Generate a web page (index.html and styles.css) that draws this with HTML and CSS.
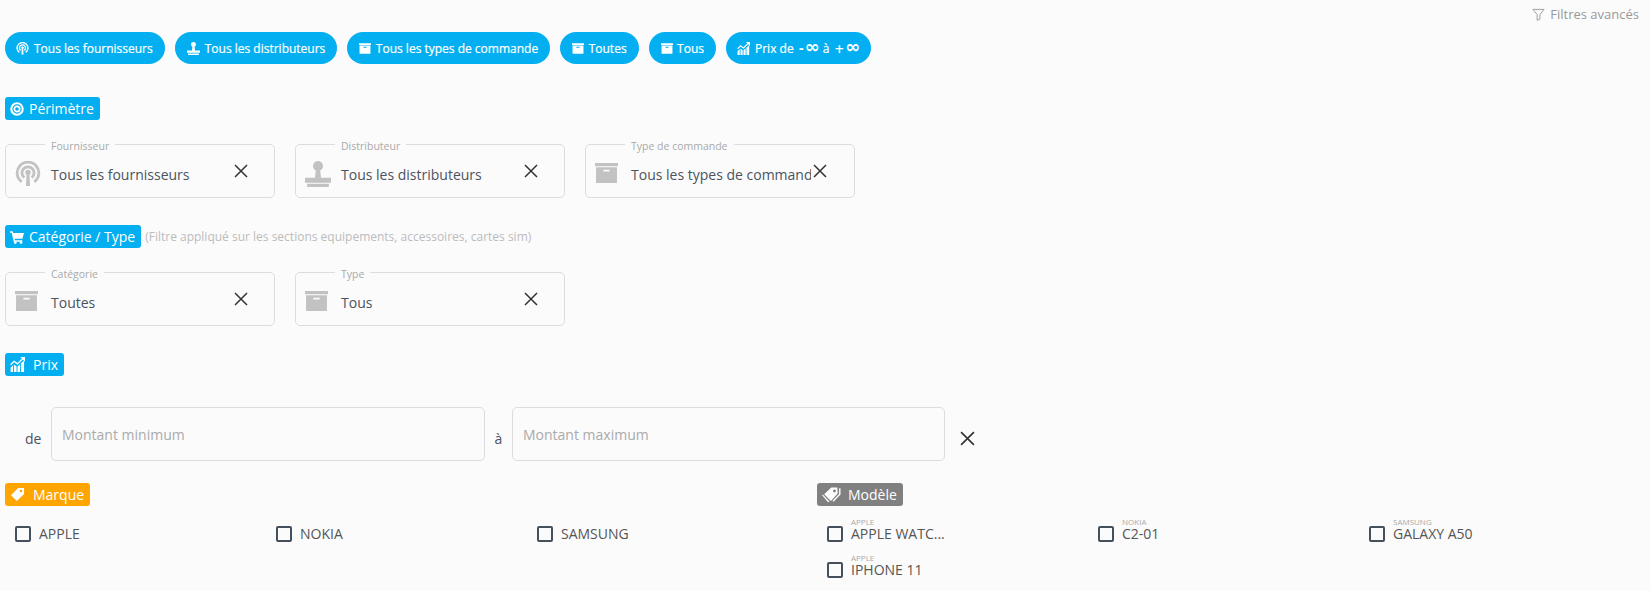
FILE: index.html
```html
<!DOCTYPE html>
<html lang="fr">
<head>
<meta charset="utf-8">
<title>Filtres</title>
<link rel="stylesheet" href="styles.css">
</head>
<body>
<svg class="defs" width="0" height="0" aria-hidden="true">
  <symbol id="i-pod" viewBox="0 0 24 24"><path fill="none" stroke="currentColor" stroke-width="2.600" d="M6.200 19.200a10 10 0 1 1 11.600 0M8.600 15.400a5.600 5.600 0 1 1 6.800 0"/><circle cx="12" cy="10.600" r="2.500" fill="currentColor"/><path fill="currentColor" d="M10.600 13h2.800l.5 10h-3.800z"/></symbol>
  <symbol id="i-stamp" viewBox="0 0 24 24"><circle cx="12" cy="4.600" r="4.600" fill="currentColor"/><path fill="currentColor" d="M10 8h4l.8 8h-5.600zM0 15.500h24v4.500H0zM2 21h20v3H2z"/></symbol>
  <symbol id="i-box" viewBox="0 0 22 19"><path fill="currentColor" fill-rule="evenodd" d="M0 0h22v3H0zM1 4h20v15H1zM8 6.500V8h6V6.500z"/></symbol>
  <symbol id="i-chart" viewBox="0 0 24 24"><path fill="currentColor" d="M1 17l4-4v11H1zM6.500 12l4 3v9h-4zM12 15l4-3.500V24h-4zM17.500 10l5-4.500V24h-5z"/><path fill="none" stroke="currentColor" stroke-width="2" d="M1 12.500l5.500-5.500 5.500 4 8.500-8.500"/><path fill="currentColor" d="M16.500 0H24v7.500z"/></symbol>
  <symbol id="i-target" viewBox="0 0 24 24"><circle cx="12" cy="12" r="9.800" fill="none" stroke="currentColor" stroke-width="3.600"/><circle cx="12" cy="12" r="4.600" fill="none" stroke="currentColor" stroke-width="3"/></symbol>
  <symbol id="i-cart" viewBox="0 0 24 24"><path fill="currentColor" d="M0 2h4.500l.8 3H24l-2.800 10H8l.5 2.500h12.500v2.500H6.500L2.800 4.500H0z"/><circle cx="9" cy="21.500" r="2.300" fill="currentColor"/><circle cx="19" cy="21.500" r="2.300" fill="currentColor"/></symbol>
  <symbol id="i-tag" viewBox="0 0 24 24"><path fill="currentColor" fill-rule="evenodd" d="M13 1.500h9.500v9.500L11 22.500 1.500 13zM17.500 4.500a2 2 0 1 0 0 4 2 2 0 0 0 0-4z"/></symbol>
  <symbol id="i-tags" viewBox="0 0 28 24"><path fill="currentColor" fill-rule="evenodd" d="M13 2h8.500l.5 8.500L12.500 21 3 11.500zM17.500 5a2 2 0 1 0 0 4 2 2 0 0 0 0-4z"/><path fill="none" stroke="currentColor" stroke-width="2" d="M25 3v8.500L15.500 21.500"/><path fill="currentColor" d="M1 12l9.500 10-2 1L0 13z"/></symbol>
  <symbol id="i-x" viewBox="0 0 14 14"><path fill="none" stroke="currentColor" stroke-width="1.500" d="M1 1l12 12M13 1L1 13"/></symbol>
</svg>

<main class="page">
  <div class="advanced">
    <svg class="filter-icon" viewBox="0 0 14 14"><path fill="none" stroke="currentColor" stroke-width="1" d="M1 1.500h12L8.500 7v5l-3 1.200V7z"/></svg>
    <span>Filtres avancés</span>
  </div>

  <div class="pills">
    <span class="pill"><svg class="pill-ic"><use href="#i-pod"/></svg>Tous les fournisseurs</span>
    <span class="pill"><svg class="pill-ic pill-ic-stamp"><use href="#i-stamp"/></svg>Tous les distributeurs</span>
    <span class="pill"><svg class="pill-ic pill-ic-box"><use href="#i-box"/></svg>Tous les types de commande</span>
    <span class="pill"><svg class="pill-ic pill-ic-box"><use href="#i-box"/></svg>Toutes</span>
    <span class="pill"><svg class="pill-ic pill-ic-box"><use href="#i-box"/></svg>Tous</span>
    <span class="pill"><svg class="pill-ic"><use href="#i-chart"/></svg>Prix de<b class="inf"><i class="sign">-</i>∞</b>à<b class="inf inf-plus"><i class="sign">+</i>∞</b></span>
  </div>

  <div class="head head-perimetre"><span class="badge"><svg class="badge-ic"><use href="#i-target"/></svg>Périmètre</span></div>
  <div class="fields">
    <div class="field">
      <span class="legend">Fournisseur</span>
      <svg class="field-ic"><use href="#i-pod"/></svg>
      <span class="value">Tous les fournisseurs</span>
      <svg class="clear"><use href="#i-x"/></svg>
    </div>
    <div class="field">
      <span class="legend">Distributeur</span>
      <svg class="field-ic"><use href="#i-stamp"/></svg>
      <span class="value">Tous les distributeurs</span>
      <svg class="clear"><use href="#i-x"/></svg>
    </div>
    <div class="field">
      <span class="legend">Type de commande</span>
      <svg class="field-ic field-ic-box"><use href="#i-box"/></svg>
      <span class="value value-clip">Tous les types de commande</span>
      <svg class="clear clear-tight"><use href="#i-x"/></svg>
    </div>
  </div>

  <div class="head head-cat"><span class="badge"><svg class="badge-ic"><use href="#i-cart"/></svg>Catégorie / Type</span><span class="note">(Filtre appliqué sur les sections equipements, accessoires, cartes sim)</span></div>
  <div class="fields">
    <div class="field">
      <span class="legend">Catégorie</span>
      <svg class="field-ic field-ic-box"><use href="#i-box"/></svg>
      <span class="value">Toutes</span>
      <svg class="clear"><use href="#i-x"/></svg>
    </div>
    <div class="field">
      <span class="legend">Type</span>
      <svg class="field-ic field-ic-box"><use href="#i-box"/></svg>
      <span class="value">Tous</span>
      <svg class="clear"><use href="#i-x"/></svg>
    </div>
  </div>

  <div class="head head-prix"><span class="badge"><svg class="badge-ic badge-ic-wide"><use href="#i-chart"/></svg>Prix</span></div>
  <div class="price">
    <span class="price-de">de</span>
    <div class="price-input">Montant minimum</div>
    <span class="price-a">à</span>
    <div class="price-input price-input-max">Montant maximum</div>
    <svg class="price-clear"><use href="#i-x"/></svg>
  </div>

  <div class="lists">
    <section class="list-brand">
      <span class="badge badge-orange"><svg class="badge-ic badge-ic-wide"><use href="#i-tag"/></svg>Marque</span>
      <div class="brand-grid">
        <label class="check"><span class="box"></span><span>APPLE</span></label>
        <label class="check"><span class="box"></span><span>NOKIA</span></label>
        <label class="check"><span class="box"></span><span>SAMSUNG</span></label>
      </div>
    </section>
    <section class="list-model">
      <span class="badge badge-grey"><svg class="badge-ic badge-ic-tags"><use href="#i-tags"/></svg>Modèle</span>
      <div class="model-grid">
        <label class="check"><span class="box"></span><span class="model"><small>APPLE</small>APPLE WATC...</span></label>
        <label class="check"><span class="box"></span><span class="model"><small>NOKIA</small>C2-01</span></label>
        <label class="check"><span class="box"></span><span class="model"><small>SAMSUNG</small>GALAXY A50</span></label>
        <label class="check"><span class="box"></span><span class="model"><small>APPLE</small>IPHONE 11</span></label>
      </div>
    </section>
  </div>
</main>
</body>
</html>
```
FILE: styles.css
```css
* { box-sizing: border-box; }
html, body { margin: 0; padding: 0; }
body {
  width: 1650px;
  height: 591px;
  overflow: hidden;
  background: #fbfbfb;
  font-family: "Open Sans", "Noto Sans", sans-serif;
  color: #4a5361;
}
.defs { display: block; height: 0; }
.page { padding: 0 5px; }

.advanced {
  display: flex;
  justify-content: flex-end;
  align-items: center;
  height: 28px;
  padding-right: 6px;
  gap: 5px;
  font-size: 13px;
  color: #999;
}
.filter-icon { width: 13px; height: 13px; }

.pills { display: flex; gap: 10px; margin-top: 4px; }
.pill {
  display: flex;
  align-items: center;
  height: 32px;
  padding: 0 12px 0 11px;
  border-radius: 16px;
  background: #03aff0;
  color: #fff;
  font-size: 12px;
  font-weight: 400;
  -webkit-text-stroke: 0.2px #fff;
  white-space: nowrap;
}
.pill-ic { width: 13px; height: 13px; margin-right: 5px; flex: none; }
.pill-ic-stamp { margin-left: 1px; }
.pill-ic-box { width: 12px; height: 11px; margin-left: 1px; margin-right: 4.5px; }
.inf {
  margin: 0 3px 0 5px;
  font-family: "DejaVu Sans", sans-serif;
  font-size: 18px;
  line-height: 16px;
  font-weight: 700;
  -webkit-text-stroke: 0;
}
.inf-plus { margin: 0 -1px 0 5px; }
.sign { font-size: 12px; font-style: normal; margin-right: 1px; }

.head { display: flex; align-items: center; height: 23px; }
.head-perimetre { margin-top: 33px; }
.head-cat { margin-top: 27px; }
.head-prix { margin-top: 27px; }

.badge {
  display: inline-flex;
  align-items: center;
  height: 23px;
  padding: 0 6px 0 5px;
  border-radius: 3px;
  background: #03aff0;
  color: #fff;
  font-size: 14px;
  font-weight: 400;
  white-space: nowrap;
}
.badge-ic { width: 14px; height: 14px; margin-right: 5px; flex: none; }
.badge-ic-wide { width: 15px; height: 15px; margin-right: 8px; }
.badge-ic-tags { width: 20px; height: 17px; margin-right: 6px; }
.badge-orange { background: #ffa500; }
.badge-grey { background: #808080; }
.note { margin-left: 4px; font-size: 12px; color: #bbb; }

.fields { display: flex; gap: 20px; margin-top: 24px; }
.field {
  position: relative;
  display: flex;
  align-items: center;
  width: 270px;
  height: 54px;
  border: 1px solid #ddd;
  border-radius: 5px;
  padding-left: 9px;
}
.legend {
  position: absolute;
  top: -6px;
  left: 39px;
  padding: 0 6px;
  background: #fbfbfb;
  color: #aaa;
  font-size: 10.5px;
  line-height: 14px;
}
.field-ic { width: 26px; height: 26px; margin-top: 5px; color: #c2c2c2; flex: none; }
.field-ic-box { width: 23px; height: 20px; margin: 3px 3px 0 0; }
.value {
  width: 187px;
  margin-left: 10px;
  padding-top: 6px;
  font-size: 14px;
  white-space: nowrap;
}
.value-clip { width: 180px; overflow: hidden; }
.clear { width: 14px; height: 14px; margin: 0 0 0 -4px; color: #333; flex: none; }
.clear-tight { margin-left: 2px; }

.price { display: flex; align-items: center; margin-top: 31px; height: 54px; }
.price-de { width: 46px; padding: 9px 0 0 20px; font-size: 14px; }
.price-a { width: 27px; padding-top: 9px; text-align: center; font-size: 14px; }
.price-input {
  display: flex;
  align-items: center;
  width: 434px;
  height: 54px;
  padding-left: 10px;
  border: 1px solid #ddd;
  border-radius: 5px;
  font-size: 14px;
  color: #aaa;
}
.price-input-max { width: 433px; }
.price-clear { width: 15px; height: 15px; margin: 9px 0 0 15px; color: #333; }

.lists { display: flex; margin-top: 22px; }
.list-brand { width: 812px; }
.list-model { flex: 1; }
.brand-grid { display: flex; margin-top: 17px; padding-left: 10px; }
.brand-grid .check { width: 261px; }
.model-grid {
  display: grid;
  grid-template-columns: 271px 271px 271px;
  grid-auto-rows: 19px;
  row-gap: 17px;
  margin-top: 16px;
  padding-left: 10px;
}
.check { display: flex; align-items: center; gap: 8px; height: 19px; font-size: 14px; color: #555; }
.box {
  width: 16px;
  height: 16px;
  border: 2px solid #44505c;
  border-radius: 2px;
  flex: none;
}
.model { display: block; position: relative; line-height: 19px; }
.model small {
  position: absolute;
  top: -7px;
  left: 0;
  font-size: 8px;
  line-height: 9px;
  color: #aaa;
}
```
